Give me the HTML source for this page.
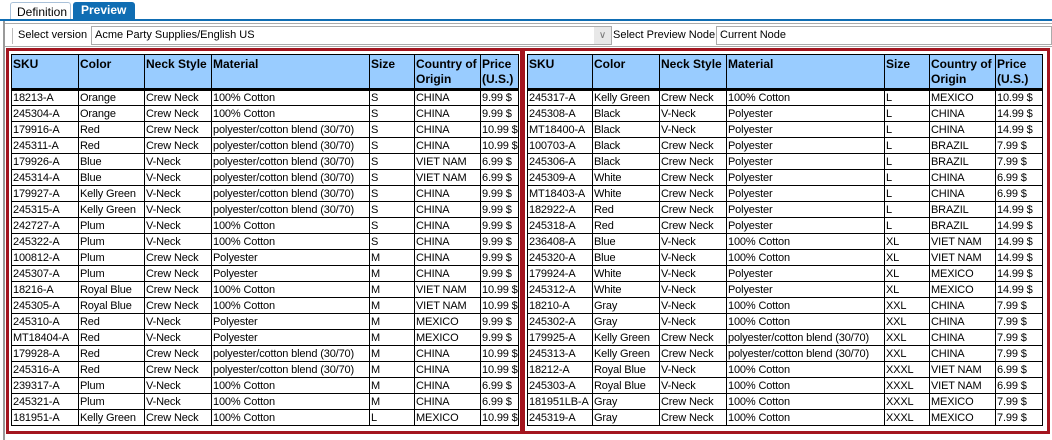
<!DOCTYPE html>
<html><head><meta charset="utf-8"><style>
*{margin:0;padding:0;box-sizing:border-box}
body{width:1052px;height:440px;background:#fff;position:relative;overflow:hidden;font-family:"Liberation Sans",Arial,sans-serif;font-size:11px;color:#000}
.abs{position:absolute}
table{position:absolute;border-collapse:collapse;table-layout:fixed;font-size:11px}
td,th{border:1px solid #000;height:16px;padding:0 0 0 1px;white-space:nowrap;overflow:hidden;line-height:14px;text-align:left;letter-spacing:-0.15px}
th{background:#99ccff;font-weight:bold;font-size:12px;vertical-align:top;height:35px;padding-top:2px;line-height:15px;border-bottom:3px solid #000;white-space:normal;letter-spacing:0}
.box{position:absolute;border:3px solid #a3151f}
</style></head><body>
<div class="abs" style="left:10px;top:2px;width:61px;height:19px;border:1px solid #a9c1d9;border-bottom:none;border-radius:3px 3px 0 0;padding:2px 0 0 6px;font-size:12px">Definition</div>
<div class="abs" style="left:73px;top:2px;width:62px;height:18px;background:#0f6db3;border-radius:3px 3px 0 0;color:#fff;font-weight:bold;font-size:12px;padding:1px 0 0 8px">Preview</div>
<div class="abs" style="left:0;top:19px;width:1052px;height:2px;background:#0f6db3"></div>
<div class="abs" style="left:3px;top:21px;width:2px;height:419px;background:#9a9a9a"></div>
<div class="abs" style="left:5px;top:23px;width:1047px;height:1px;background:#aaa"></div>
<div class="abs" style="left:12px;top:28px;width:1px;height:16px;background:#bbb"></div>
<div class="abs" style="left:18px;top:29px;font-size:11px">Select version</div>
<div class="abs" style="left:91px;top:26px;width:521px;height:19px;border:1px solid #ababab;padding:2px 0 0 3px">Acme Party Supplies/English US<span style="position:absolute;right:0;top:0;width:17px;height:17px;background:#e8e8e8;text-align:center;color:#777;font-size:10px;line-height:17px">&#8744;</span></div>
<div class="abs" style="left:613px;top:29px">Select Preview Node</div>
<div class="abs" style="left:716px;top:26px;width:336px;height:19px;border:1px solid #ababab;padding:2px 0 0 3px">Current Node</div>
<div class="abs" style="left:5px;top:46px;width:1047px;height:1px;background:#aaa"></div>
<div class="box" style="left:6px;top:48px;width:517px;height:386px"></div>
<div class="box" style="left:522px;top:48px;width:528px;height:386px"></div>

<table style="left:11px;top:54px;width:507px">
<colgroup><col style="width:67px"><col style="width:66px"><col style="width:67px"><col style="width:158px"><col style="width:45px"><col style="width:66px"><col style="width:38px"></colgroup>
<tr><th>SKU</th><th>Color</th><th>Neck Style</th><th>Material</th><th>Size</th><th>Country of Origin</th><th>Price (U.S.)</th></tr>
<tr><td>18213-A</td><td>Orange</td><td>Crew Neck</td><td>100% Cotton</td><td>S</td><td>CHINA</td><td>9.99 $</td></tr>
<tr><td>245304-A</td><td>Orange</td><td>Crew Neck</td><td>100% Cotton</td><td>S</td><td>CHINA</td><td>9.99 $</td></tr>
<tr><td>179916-A</td><td>Red</td><td>Crew Neck</td><td>polyester/cotton blend (30/70)</td><td>S</td><td>CHINA</td><td>10.99 $</td></tr>
<tr><td>245311-A</td><td>Red</td><td>Crew Neck</td><td>polyester/cotton blend (30/70)</td><td>S</td><td>CHINA</td><td>10.99 $</td></tr>
<tr><td>179926-A</td><td>Blue</td><td>V-Neck</td><td>polyester/cotton blend (30/70)</td><td>S</td><td>VIET NAM</td><td>6.99 $</td></tr>
<tr><td>245314-A</td><td>Blue</td><td>V-Neck</td><td>polyester/cotton blend (30/70)</td><td>S</td><td>VIET NAM</td><td>6.99 $</td></tr>
<tr><td>179927-A</td><td>Kelly Green</td><td>V-Neck</td><td>polyester/cotton blend (30/70)</td><td>S</td><td>CHINA</td><td>9.99 $</td></tr>
<tr><td>245315-A</td><td>Kelly Green</td><td>V-Neck</td><td>polyester/cotton blend (30/70)</td><td>S</td><td>CHINA</td><td>9.99 $</td></tr>
<tr><td>242727-A</td><td>Plum</td><td>V-Neck</td><td>100% Cotton</td><td>S</td><td>CHINA</td><td>9.99 $</td></tr>
<tr><td>245322-A</td><td>Plum</td><td>V-Neck</td><td>100% Cotton</td><td>S</td><td>CHINA</td><td>9.99 $</td></tr>
<tr><td>100812-A</td><td>Plum</td><td>Crew Neck</td><td>Polyester</td><td>M</td><td>CHINA</td><td>9.99 $</td></tr>
<tr><td>245307-A</td><td>Plum</td><td>Crew Neck</td><td>Polyester</td><td>M</td><td>CHINA</td><td>9.99 $</td></tr>
<tr><td>18216-A</td><td>Royal Blue</td><td>Crew Neck</td><td>100% Cotton</td><td>M</td><td>VIET NAM</td><td>10.99 $</td></tr>
<tr><td>245305-A</td><td>Royal Blue</td><td>Crew Neck</td><td>100% Cotton</td><td>M</td><td>VIET NAM</td><td>10.99 $</td></tr>
<tr><td>245310-A</td><td>Red</td><td>V-Neck</td><td>Polyester</td><td>M</td><td>MEXICO</td><td>9.99 $</td></tr>
<tr><td>MT18404-A</td><td>Red</td><td>V-Neck</td><td>Polyester</td><td>M</td><td>MEXICO</td><td>9.99 $</td></tr>
<tr><td>179928-A</td><td>Red</td><td>Crew Neck</td><td>polyester/cotton blend (30/70)</td><td>M</td><td>CHINA</td><td>10.99 $</td></tr>
<tr><td>245316-A</td><td>Red</td><td>Crew Neck</td><td>polyester/cotton blend (30/70)</td><td>M</td><td>CHINA</td><td>10.99 $</td></tr>
<tr><td>239317-A</td><td>Plum</td><td>V-Neck</td><td>100% Cotton</td><td>M</td><td>CHINA</td><td>6.99 $</td></tr>
<tr><td>245321-A</td><td>Plum</td><td>V-Neck</td><td>100% Cotton</td><td>M</td><td>CHINA</td><td>6.99 $</td></tr>
<tr><td>181951-A</td><td>Kelly Green</td><td>Crew Neck</td><td>100% Cotton</td><td>L</td><td>MEXICO</td><td>10.99 $</td></tr>
</table>

<table style="left:527px;top:54px;width:515px">
<colgroup><col style="width:65px"><col style="width:67px"><col style="width:67px"><col style="width:158px"><col style="width:45px"><col style="width:66px"><col style="width:47px"></colgroup>
<tr><th>SKU</th><th>Color</th><th>Neck Style</th><th>Material</th><th>Size</th><th>Country of Origin</th><th>Price (U.S.)</th></tr>
<tr><td>245317-A</td><td>Kelly Green</td><td>Crew Neck</td><td>100% Cotton</td><td>L</td><td>MEXICO</td><td>10.99 $</td></tr>
<tr><td>245308-A</td><td>Black</td><td>V-Neck</td><td>Polyester</td><td>L</td><td>CHINA</td><td>14.99 $</td></tr>
<tr><td>MT18400-A</td><td>Black</td><td>V-Neck</td><td>Polyester</td><td>L</td><td>CHINA</td><td>14.99 $</td></tr>
<tr><td>100703-A</td><td>Black</td><td>Crew Neck</td><td>Polyester</td><td>L</td><td>BRAZIL</td><td>7.99 $</td></tr>
<tr><td>245306-A</td><td>Black</td><td>Crew Neck</td><td>Polyester</td><td>L</td><td>BRAZIL</td><td>7.99 $</td></tr>
<tr><td>245309-A</td><td>White</td><td>Crew Neck</td><td>Polyester</td><td>L</td><td>CHINA</td><td>6.99 $</td></tr>
<tr><td>MT18403-A</td><td>White</td><td>Crew Neck</td><td>Polyester</td><td>L</td><td>CHINA</td><td>6.99 $</td></tr>
<tr><td>182922-A</td><td>Red</td><td>Crew Neck</td><td>Polyester</td><td>L</td><td>BRAZIL</td><td>14.99 $</td></tr>
<tr><td>245318-A</td><td>Red</td><td>Crew Neck</td><td>Polyester</td><td>L</td><td>BRAZIL</td><td>14.99 $</td></tr>
<tr><td>236408-A</td><td>Blue</td><td>V-Neck</td><td>100% Cotton</td><td>XL</td><td>VIET NAM</td><td>14.99 $</td></tr>
<tr><td>245320-A</td><td>Blue</td><td>V-Neck</td><td>100% Cotton</td><td>XL</td><td>VIET NAM</td><td>14.99 $</td></tr>
<tr><td>179924-A</td><td>White</td><td>V-Neck</td><td>Polyester</td><td>XL</td><td>MEXICO</td><td>14.99 $</td></tr>
<tr><td>245312-A</td><td>White</td><td>V-Neck</td><td>Polyester</td><td>XL</td><td>MEXICO</td><td>14.99 $</td></tr>
<tr><td>18210-A</td><td>Gray</td><td>V-Neck</td><td>100% Cotton</td><td>XXL</td><td>CHINA</td><td>7.99 $</td></tr>
<tr><td>245302-A</td><td>Gray</td><td>V-Neck</td><td>100% Cotton</td><td>XXL</td><td>CHINA</td><td>7.99 $</td></tr>
<tr><td>179925-A</td><td>Kelly Green</td><td>Crew Neck</td><td>polyester/cotton blend (30/70)</td><td>XXL</td><td>CHINA</td><td>7.99 $</td></tr>
<tr><td>245313-A</td><td>Kelly Green</td><td>Crew Neck</td><td>polyester/cotton blend (30/70)</td><td>XXL</td><td>CHINA</td><td>7.99 $</td></tr>
<tr><td>18212-A</td><td>Royal Blue</td><td>V-Neck</td><td>100% Cotton</td><td>XXXL</td><td>VIET NAM</td><td>6.99 $</td></tr>
<tr><td>245303-A</td><td>Royal Blue</td><td>V-Neck</td><td>100% Cotton</td><td>XXXL</td><td>VIET NAM</td><td>6.99 $</td></tr>
<tr><td>181951LB-A</td><td>Gray</td><td>Crew Neck</td><td>100% Cotton</td><td>XXXL</td><td>MEXICO</td><td>7.99 $</td></tr>
<tr><td>245319-A</td><td>Gray</td><td>Crew Neck</td><td>100% Cotton</td><td>XXXL</td><td>MEXICO</td><td>7.99 $</td></tr>
</table>
</body></html>
